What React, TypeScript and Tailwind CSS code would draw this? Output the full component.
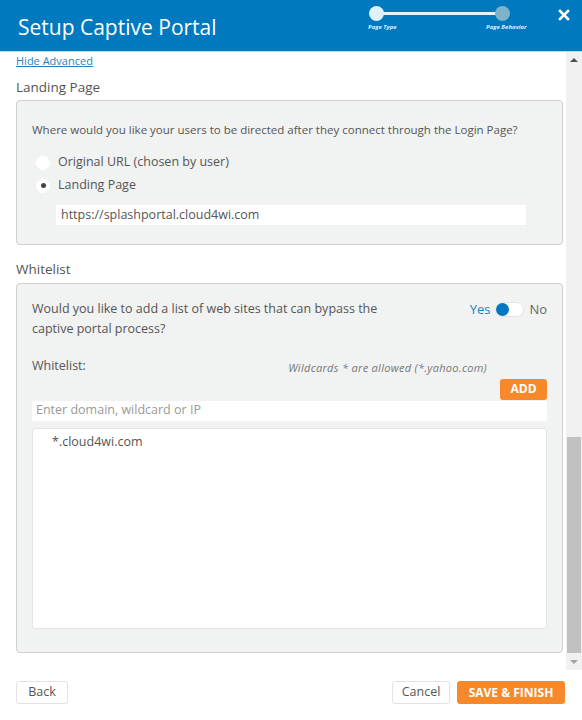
import { useState } from 'react';

const font = { fontFamily: '"Open Sans", "Noto Sans", sans-serif' };

const Stepper = () => (
  <div className="relative w-[160px] h-[36px]">
    {/* track between the two steps */}
    <div className="absolute left-[8px] w-[126px] top-[12px] h-[3px] bg-[#e6f4fb]" />
    <div className="absolute left-[1px] top-[6px] w-[15px] h-[15px] rounded-full bg-[#dff2fb]" />
    <div className="absolute left-[127px] top-[6px] w-[15px] h-[15px] rounded-full bg-[#7db3cb]" />
    <span className="absolute left-0 top-[23px] text-[6px] leading-[8px] italic font-bold text-[#dcefff] whitespace-nowrap">
      Page Type
    </span>
    <span className="absolute left-[118px] top-[23px] text-[6px] leading-[8px] italic font-bold text-[#dcefff] whitespace-nowrap">
      Page Behavior
    </span>
  </div>
);

const Radio = ({ checked, label }: { checked: boolean; label: string }) => (
  <label className="flex items-center h-[23px] gap-[8px]">
    <span className="w-[14px] h-[14px] rounded-full bg-white flex items-center justify-center">
      {checked && <span className="w-[5px] h-[5px] rounded-full bg-[#444]" />}
    </span>
    <span className="text-[12.5px] text-[#555]">{label}</span>
  </label>
);

const Toggle = ({ on }: { on: boolean }) => (
  <div className="flex items-center text-[13px]">
    <span className={on ? 'text-[#1a82c4]' : 'text-[#666]'}>Yes</span>
    <span className="mx-[5px] w-[29px] h-[15px] rounded-full bg-white border border-[#e4e4e4] flex items-center">
      <span className={`w-[13px] h-[13px] rounded-full bg-[#0077c0] ${on ? '' : 'ml-auto'}`} />
    </span>
    <span className={on ? 'text-[#666]' : 'text-[#1a82c4]'}>No</span>
  </div>
);

const Scrollbar = () => (
  <div className="w-[16px] bg-[#f1f1f1] flex flex-col">
    <div className="h-[16px] flex items-center justify-center">
      <span className="w-0 h-0 border-l-[4px] border-r-[4px] border-b-[4px] border-l-transparent border-r-transparent border-b-[#505050]" />
    </div>
    <div className="flex-1 flex flex-col justify-end px-[1px]">
      <div className="h-[216px] bg-[#c1c1c1] mb-[1px]" />
    </div>
    <div className="h-[16px] flex items-center justify-center">
      <span className="w-0 h-0 border-l-[4px] border-r-[4px] border-t-[4px] border-l-transparent border-r-transparent border-t-[#a3a3a3]" />
    </div>
  </div>
);

export default function App() {
  const [whitelistOn] = useState(true);
  const [domains] = useState(['*.cloud4wi.com']);

  return (
    <div className="w-[582px] h-[720px] bg-white flex flex-col overflow-hidden" style={font}>
      {/* Header */}
      <header className="h-[52px] bg-[#0079bf] border-b border-[#b9dcef] flex items-start shrink-0">
        <h1 className="ml-[18px] mt-[12px] text-[21px] leading-[30px] text-white">Setup Captive Portal</h1>
        <div className="ml-auto mr-[12px] flex items-start">
          <Stepper />
          <button className="ml-[30px] mt-[9px] text-white">
            <svg width="12" height="12" viewBox="0 0 12 12" className="block">
              <path d="M2 2 L10 10 M10 2 L2 10" stroke="white" strokeWidth="2.6" strokeLinecap="square" />
            </svg>
          </button>
        </div>
      </header>

      {/* Scrolling body */}
      <div className="h-[618px] flex shrink-0">
        <div className="flex-1 overflow-hidden pl-[16px] pr-[3px] pt-[1px]">
          <a className="block text-[11px] leading-[16px] text-[#1f7fc0] underline">Hide Advanced</a>

          <h2 className="mt-[8px] text-[13.5px] leading-[20px] text-[#555]">Landing Page</h2>
          <section className="mt-[3px] h-[145px] bg-[#f1f2f2] border border-[#cfd1d1] rounded-[4px] px-[15px] pt-[20px]">
            <p className="text-[11.5px] leading-[18px] text-[#555]">
              Where would you like your users to be directed after they connect through the Login Page?
            </p>
            <div className="mt-[12px] pl-[4px]">
              <Radio checked={false} label="Original URL (chosen by user)" />
              <Radio checked label="Landing Page" />
            </div>
            <div className="mt-[8px] ml-[24px] mr-[21px] h-[20px] bg-white flex items-center px-[5px] text-[12.5px] text-[#555]">
              https://splashportal.cloud4wi.com
            </div>
          </section>

          <h2 className="mt-[14px] text-[13.5px] leading-[20px] text-[#555]">Whitelist</h2>
          <section className="mt-[4px] h-[370px] bg-[#f1f2f2] border border-[#cfd1d1] rounded-[4px] px-[15px] pt-[15px]">
            <div className="flex items-start justify-between">
              <p className="w-[360px] text-[12.5px] leading-[20px] text-[#555]">
                Would you like to add a list of web sites that can bypass the captive portal process?
              </p>
              <div className="mt-[1px]">
                <Toggle on={whitelistOn} />
              </div>
            </div>

            <div className="mt-[17px] flex items-center justify-between">
              <span className="text-[12.5px] leading-[20px] text-[#555]">Whitelist:</span>
              <span className="mr-[60px] mt-[4px] text-[11px] tracking-[0.3px] italic text-[#777]">
                Wildcards * are allowed (*.yahoo.com)
              </span>
            </div>
            <div className="mt-[2px] flex justify-end">
              <button className="h-[21px] w-[47px] rounded-[3px] bg-[#f7892b] text-white text-[12px] font-bold">ADD</button>
            </div>
            <div className="mt-[1px] h-[20px] bg-white rounded-[2px] flex items-center px-[4px] text-[12.5px] text-[#999]">
              Enter domain, wildcard or IP
            </div>
            <ul className="mt-[7px] h-[201px] bg-white border border-[#e3e5e5] rounded-[3px] pt-[3px] pl-[19px]">
              {domains.map((d) => (
                <li key={d} className="text-[12.5px] leading-[20px] text-[#555]">{d}</li>
              ))}
            </ul>
          </section>
        </div>
        <Scrollbar />
      </div>

      {/* Footer actions */}
      <footer className="flex items-start px-[16px] pt-[11px]">
        <button className="h-[23px] w-[52px] bg-white border border-[#e2e2e2] rounded-[3px] text-[12.5px] text-[#555]">Back</button>
        <button className="ml-auto h-[23px] w-[58px] bg-white border border-[#e2e2e2] rounded-[3px] text-[12.5px] text-[#555]">Cancel</button>
        <button className="ml-[7px] mr-[1px] h-[23px] w-[108px] bg-[#f7892b] rounded-[3px] text-[12px] font-bold text-white">SAVE &amp; FINISH</button>
      </footer>
    </div>
  );
}
